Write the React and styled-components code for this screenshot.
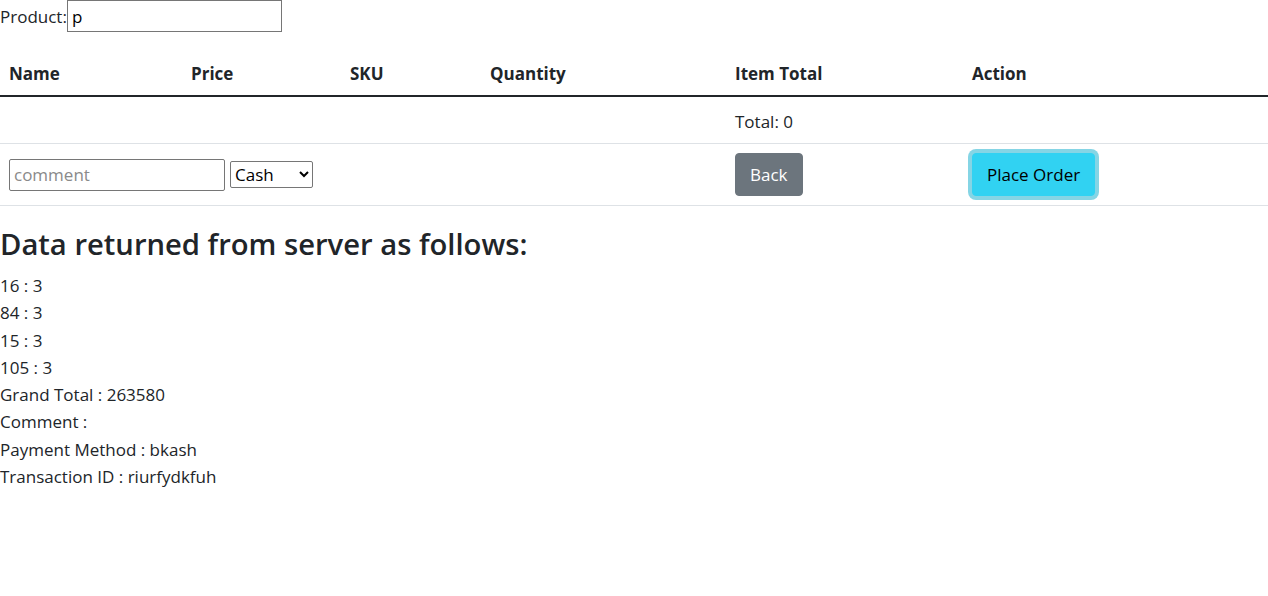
import React from 'react';
import styled, { createGlobalStyle } from 'styled-components';

const Global = createGlobalStyle`
  body {
    margin: 0;
    font-family: "Open Sans", "Noto Sans", sans-serif;
    font-size: 17px;
    line-height: 27px;
    color: #212529;
    background: #fff;
  }
`

const Page = styled.div`
  width: 1268px;
`

const ProductBar = styled.div`
  display: flex;
  align-items: center;
  height: 32px;
`

const ProductInput = styled.input`
  width: 215px;
  height: 32px;
  box-sizing: border-box;
  border: 1px solid #767676;
  font: inherit;
  padding: 0 4px;
  margin: 0;
`

const Table = styled.table`
  width: 100%;
  border-collapse: collapse;
  table-layout: fixed;
  margin-top: 23px;
`

const Th = styled.th`
  text-align: left;
  font-weight: 700;
  padding: 4px 9px 8px;
  height: 28px;
  border-bottom: 2px solid #212529;
`

const Td = styled.td`
  padding: ${p => p.$h ? '9px 9px' : '10px 9px 8px'};
  border-bottom: 1px solid #dee2e6;
  vertical-align: middle;
  height: ${p => p.$h || 28}px;
`

const CommentInput = styled.input`
  width: 216px;
  height: 32px;
  box-sizing: border-box;
  border: 1px solid #767676;
  border-radius: 2px;
  font: inherit;
  padding: 0 4px;
  margin: 0 5px 0 0;
  vertical-align: middle;
  &::placeholder { color: #8a8a8a; }
`

const Select = styled.select`
  width: 83px;
  height: 27px;
  font: inherit;
  border: 1px solid #767676;
  border-radius: 2px;
  vertical-align: middle;
  background: #fff;
`

const Button = styled.button`
  font: inherit;
  height: 43px;
  padding: 0 14px;
  border-radius: 4px;
  border: 1px solid ${p => p.$bg};
  background: ${p => p.$bg};
  color: ${p => p.$fg};
  box-shadow: ${p => p.$focus ? '0 0 0 4px rgba(11,172,204,.5)' : 'none'};
  cursor: pointer;
`

const Heading = styled.h2`
  font-size: 29.2px;
  font-weight: 600;
  line-height: 36px;
  margin: 20px 0 10px;
`

const Line = styled.div`
  line-height: 27.3px;
`

export default function App() {
  const lines = [
    '16 : 3', '84 : 3', '15 : 3', '105 : 3',
    'Grand Total : 263580', 'Comment :',
    'Payment Method : bkash', 'Transaction ID : riurfydkfuh',
  ]
  return (
    <Page>
      <Global />
      <ProductBar>
        Product:<ProductInput defaultValue="p" />
      </ProductBar>
      <Table>
        <colgroup>
          <col style={{ width: 182 }} />
          <col style={{ width: 159 }} />
          <col style={{ width: 140 }} />
          <col style={{ width: 245 }} />
          <col style={{ width: 237 }} />
          <col />
        </colgroup>
        <thead>
          <tr>
            <Th>Name</Th>
            <Th>Price</Th>
            <Th>SKU</Th>
            <Th>Quantity</Th>
            <Th>Item Total</Th>
            <Th>Action</Th>
          </tr>
        </thead>
        <tbody>
          <tr>
            <Td />
            <Td />
            <Td />
            <Td />
            <Td>Total: 0</Td>
            <Td />
          </tr>
          <tr>
            <Td colSpan={4} $h={43}>
              <CommentInput placeholder="comment" />
              <Select defaultValue="Cash">
                <option>Cash</option>
                <option>bkash</option>
              </Select>
            </Td>
            <Td $h={43}><Button $bg="#6c757d" $fg="#fff">Back</Button></Td>
            <Td $h={43}><Button $bg="#31d2f2" $fg="#000" $focus>Place Order</Button></Td>
          </tr>
        </tbody>
      </Table>
      <Heading>Data returned from server as follows:</Heading>
      {lines.map(l => <Line key={l}>{l}</Line>)}
    </Page>
  )
}
